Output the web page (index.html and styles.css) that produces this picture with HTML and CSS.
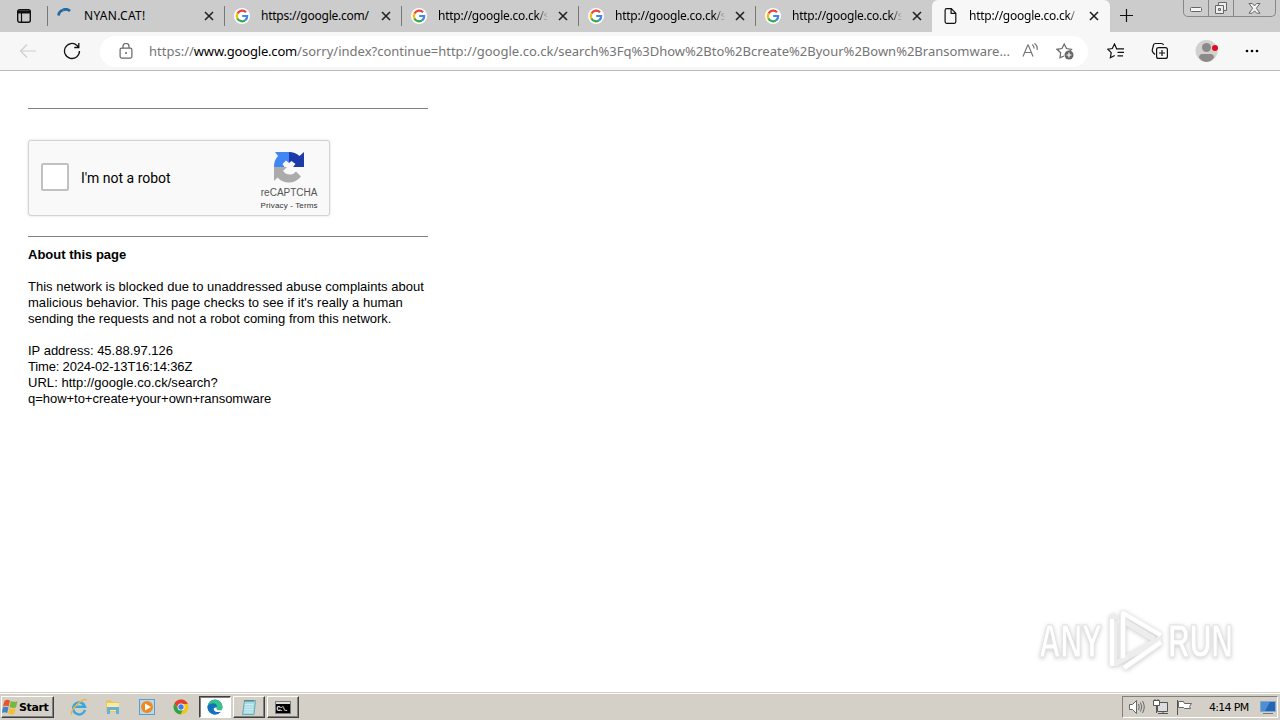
FILE: index.html
```html
<!DOCTYPE html>
<html lang="en">
<head>
    <meta charset="UTF-8">
    <title>http://google.co.ck/search</title>
    <link rel="stylesheet" href="styles.css">
</head>
<body>
<svg class="defs" width="0" height="0">
    <symbol id="google" viewBox="0 0 16 16">
        <circle cx="8" cy="8" r="8" fill="#fff"/>
        <path d="M12 4.2A5.2 5.2 0 0 0 3.5 5.5" fill="none" stroke="#ea4335" stroke-width="2.2"/>
        <path d="M3.5 5.4a5.2 5.2 0 0 0 0 5.2" fill="none" stroke="#fbbc05" stroke-width="2.2"/>
        <path d="M3.4 10.4a5.2 5.2 0 0 0 8.1 1.6" fill="none" stroke="#34a853" stroke-width="2.2"/>
        <path d="M8.2 8h5a5.2 5.2 0 0 1-1.8 4.1" fill="none" stroke="#4285f4" stroke-width="2.2"/>
    </symbol>
    <symbol id="close" viewBox="0 0 10 10">
        <path d="M1 1l8 8M9 1L1 9" fill="none" stroke="#222" stroke-width="1.6"/>
    </symbol>
</svg>

<div class="tabs">
    <div class="tab_actions">
        <svg width="16" height="16" viewBox="0 0 16 16"><rect x="1.7" y="1.7" width="12.6" height="12.6" rx="2" fill="none" stroke="#111" stroke-width="1.4"/><path d="M1.5 2.5h13v3h-13z" fill="#111"/><path d="M5.5 5v9" stroke="#111" stroke-width="1.2"/></svg>
    </div>
    <div class="tab">
        <svg class="tab_icon" viewBox="0 0 16 16"><path d="M1.5 7.500A6.500 6.500 0 0 1 6 2" fill="none" stroke="#24699f" stroke-width="2.800"/><path d="M6 2a6.500 6.500 0 0 1 7 1" fill="none" stroke="#24699f" stroke-width="2.800"/></svg>
        <span class="tab_title first">NYAN.CAT!</span>
        <svg class="tab_close"><use href="#close"/></svg>
    </div>
    <div class="tab">
        <svg class="tab_icon"><use href="#google"/></svg>
        <span class="tab_title">https://google.com/</span>
        <svg class="tab_close"><use href="#close"/></svg>
    </div>
    <div class="tab">
        <svg class="tab_icon"><use href="#google"/></svg>
        <span class="tab_title fade">http://google.co.ck/s</span>
        <svg class="tab_close"><use href="#close"/></svg>
    </div>
    <div class="tab">
        <svg class="tab_icon"><use href="#google"/></svg>
        <span class="tab_title fade">http://google.co.ck/s</span>
        <svg class="tab_close"><use href="#close"/></svg>
    </div>
    <div class="tab">
        <svg class="tab_icon"><use href="#google"/></svg>
        <span class="tab_title fade">http://google.co.ck/s</span>
        <svg class="tab_close"><use href="#close"/></svg>
    </div>
    <div class="tab active">
        <svg class="tab_icon" viewBox="0 0 16 16"><path d="M3.100 2.200q0-1.500 1.500-1.500h4.700l4.500 4.500v8.600q0 1.500-1.500 1.500H4.600q-1.500 0-1.500-1.500zM9.100.7v4.700h4.700" fill="none" stroke="#111" stroke-width="1.200"/></svg>
        <span class="tab_title fade">http://google.co.ck/</span>
        <svg class="tab_close"><use href="#close"/></svg>
    </div>
    <svg class="new_tab" width="14" height="14" viewBox="0 0 14 14"><path d="M6.500 0v13M0 6.500h13" stroke="#111" stroke-width="1.200"/></svg>
    <div class="win_ctl">
        <span><svg width="13" height="6"><rect x=".5" y=".5" width="11" height="4" rx="1" fill="#f5f5f5" stroke="#666"/></svg></span>
        <span><svg width="14" height="14" viewBox="0 0 14 14"><path d="M4.500 1.500h8v8h-8z" fill="#eee" stroke="#666"/><path d="M1.500 4.500h8v8h-8z" fill="#eee" stroke="#666"/><path d="M4.500 7.500h2v2h-2z" fill="#ccc" stroke="#666"/></svg></span>
        <span><svg width="13" height="11" viewBox="0 0 13 11"><path d="M1 .5h3.300l2.200 2.400L8.700.5H12L8.300 5.300l3.700 4.900H8.700L6.500 7.800l-2.200 2.400H1l3.700-4.900z" fill="#f5f5f5" stroke="#666"/></svg></span>
    </div>
</div>

<div class="toolbar">
    <svg class="back" width="18" height="16" viewBox="0 0 18 16"><path d="M17 8H1.500M8 1.500L1.500 8 8 14.500" fill="none" stroke="#cfcfcf" stroke-width="1.200"/></svg>
    <svg class="reload" width="18" height="18" viewBox="0 0 18 18"><path d="M16.500 9A7.500 7.500 0 1 1 14 3.400L15.500 5M15.800 1v4.500h-4.500" fill="none" stroke="#111" stroke-width="1.300"/></svg>
    <div class="address">
        <svg class="lock" width="14" height="16" viewBox="0 0 14 16"><rect x="1.100" y="5.100" width="11.800" height="10" rx="1.500" fill="none" stroke="#666" stroke-width="1.200"/><path d="M4 5V3.500a3 3 0 0 1 6 0V5" fill="none" stroke="#666" stroke-width="1.200"/><circle cx="7" cy="10" r="1" fill="#666"/></svg>
        <span class="url"><span class="scheme">https://</span><b>www.google.com</b><span class="path">/sorry/index?continue=http://google.co.ck/search%3Fq%3Dhow%2Bto%2Bcreate%2Byour%2Bown%2Bransomware...</span></span>
        <svg class="read" width="17" height="16" viewBox="0 0 17 16"><path d="M1 13.500L5.800 2h.5L11 13.500M2.700 9.500h6.700M10.200 1.500q2 1.500 1.700 4M12.500.3q3.200 2.400 2.700 6.700" fill="none" stroke="#777" stroke-width="1.200"/></svg>
        <svg class="fav" width="18" height="18" viewBox="0 0 18 18"><path d="M8 14l-4 1.800.7-5L1 7.300l5-.8L8.200 2l2.300 4.500 5 .8-2 2" fill="none" stroke="#666" stroke-width="1.200"/><circle cx="13" cy="13" r="4.500" fill="#666"/><path d="M13 10.500v5M10.500 13h5" stroke="#fff" stroke-width="1.100"/></svg>
    </div>
    <svg class="favs" width="18" height="16" viewBox="0 0 18 16"><path d="M9.500 5.500L7.500 1 5.300 5.500.8 6.200l3.400 3.500-.8 5 4.300-2.200M9 5.800h8M10.500 9.300H17M10.500 12.800H16" fill="none" stroke="#111" stroke-width="1.200"/></svg>
    <svg class="collections" width="18" height="18" viewBox="0 0 18 18"><path d="M4 12.500L2.500 11Q1 9.500 1.200 8L2.500 3Q3 1.500 4.500 1.500h6q1.500 0 2 1.500" fill="none" stroke="#111" stroke-width="1.200"/><rect x="5.600" y="5.600" width="10.800" height="10.800" rx="2" fill="none" stroke="#111" stroke-width="1.200"/><path d="M11 8v6M8 11h6" stroke="#111" stroke-width="1.200"/></svg>
    <svg class="profile" width="24" height="24" viewBox="0 0 24 24"><circle cx="11.500" cy="12" r="11" fill="#d3d1cf"/><circle cx="11.500" cy="8.500" r="4.500" fill="#8c8a88"/><path d="M4 18.500q0-3.500 3.500-3.500h8q3.500 0 3.500 3.500-2.800 4-7.500 4.500-5-.5-7.500-4.500" fill="#8c8a88"/><circle cx="20" cy="9" r="3" fill="#e00b1c"/></svg>
    <svg class="more" width="14" height="4"><circle cx="2" cy="2" r="1.300"/><circle cx="7" cy="2" r="1.300"/><circle cx="12" cy="2" r="1.300"/></svg>
</div>

<div class="page">
    <div class="content">
        <hr>
        <div class="captcha">
            <span class="checkbox"></span>
            <span class="label">I'm not a robot</span>
            <div class="brand">
                <svg width="32" height="32" viewBox="0 0 32 32">
                    <path d="M16 1Q22 1 26.500 5L31 1v15H20l2.500-3-4-3-2.500 2z" fill="#1c3aa9"/>
                    <path d="M16 1v11l-3-2.500L9.500 13l2 3H1Q1 9 5 5L2 1z" fill="#4285f4"/>
                    <path d="M1 16h13l-4 4q3 4 8 3.500 3-.5 5-3l5 5q-5 6-12 6-7 0-11.500-5L1 30z" fill="#ababab"/>
                </svg>
                <span class="name">reCAPTCHA</span>
                <span class="terms">Privacy - Terms</span>
            </div>
        </div>
        <hr>
        <div class="about">
            <b>About this page</b><br><br>
            <span class="l1">This network is blocked due to unaddressed abuse complaints about</span><br>
            <span class="l2">malicious behavior. This page checks to see if it's really a human</span><br>
            sending the requests and not a robot coming from this network.<br><br>
            IP address: 45.88.97.126<br>
            <span class="time">Time: 2024-02-13T16:14:36Z</span><br>
            <span class="l2">URL: http://google.co.ck/search?</span><br>
            <span class="query">q=how+to+create+your+own+ransomware</span>
        </div>
    </div>
    <svg class="watermark" width="210" height="72" viewBox="0 0 210 72">
        <g class="mark">
            <text x="9" y="55" textLength="63" lengthAdjust="spacingAndGlyphs">ANY</text>
            <path class="edge" d="M93 56V11l38 22M82 18v46M80 17l6-4M84 64V20M94 66l37-26M85 62l46-26M94 19l30 18"/>
            <path d="M93 56V11l38 22M82 17v47M94 66l37-26"/>
            <text x="138" y="55" textLength="65" lengthAdjust="spacingAndGlyphs">RUN</text>
        </g>
    </svg>
</div>

<div class="taskbar">
    <div class="start">
        <svg width="16" height="16" viewBox="0 0 16 16"><path d="M2.500 2Q5 0 8 1.500L6.700 7.500Q4 6 1 7.500z" fill="#e9552b"/><path d="M8.800 2q2.500 1.500 6.700.3L14 8.500q-3.500 1-6.500-.6z" fill="#75b843"/><path d="M.8 8.500q3-1.500 5.700 0L5.200 14q-2.700-1.300-5.200 0z" fill="#3d85c8"/><path d="M7.300 9q3 1.500 6.400.4L12.200 15Q9 16 6 14.500z" fill="#f6bf31"/></svg>
        <b>Start</b>
    </div>
    <span class="task"><svg width="18" height="18" viewBox="0 0 18 18"><path d="M15 12A6 6 0 1 1 15 8.800H4" fill="none" stroke="#36a7df" stroke-width="2.400"/><path d="M2 16.500C-1 13 13-1 16.500 2" fill="none" stroke="#e9b844" stroke-width="1.500"/></svg></span>
    <span class="task"><svg width="18" height="18" viewBox="0 0 18 18"><path d="M2 2h5l1 2h7v10H2z" fill="#e5c766"/><path d="M3 5h12v8H3z" fill="#fae9a3"/><path d="M3 9h12v7h-3v-4H6v4H3z" fill="#64b2d8"/></svg></span>
    <span class="task"><svg width="18" height="18" viewBox="0 0 18 18"><rect x="1.500" y="1.500" width="15" height="15" fill="#b7d9ef" stroke="#5c9cce"/><circle cx="9" cy="9" r="6" fill="#f18a1d"/><path d="M7 5.500l6 3.500-6 3.500z" fill="#fff"/></svg></span>
    <span class="task"><svg width="16" height="16" viewBox="0 0 16 16"><circle cx="8" cy="8" r="7.500" fill="#f6c51c"/><path d="M1.500 4.300A7.500 7.500 0 0 1 14.800 5H8L5 9.500z" fill="#e3402f"/><path d="M1.500 4.300A7.500 7.500 0 0 0 7.500 15.500L10.500 10 5 9.500z" fill="#31a24c"/><circle cx="8" cy="8" r="3.500" fill="#fff"/><circle cx="8" cy="8" r="2.700" fill="#397fe8"/></svg></span>
    <span class="task pressed"><svg width="16" height="16" viewBox="0 0 16 16"><circle cx="8" cy="8" r="7.500" fill="#1684cc"/><path d="M.6 7A7.500 7.500 0 0 1 15.500 8q0 3-3.500 3-3 0-2.500-2.500Q9.500 5 6 5 2.500 5 .6 7" fill="#35c486"/><path d="M.6 7q2-3 5.800-2.800Q9.800 4.500 10 7.500L6 9.500q1 4 7.500 3.600A7.500 7.500 0 0 1 .6 7" fill="#1472bd"/><path d="M9.500 8.500Q9 11 12 11.300q2 .2 3.300-1.300l-1.300 2.800Q8 14 6.700 10.500 6.500 8 9.500 8.500" fill="#fff"/></svg></span>
    <span class="task raised"><svg width="18" height="18" viewBox="0 0 18 18"><path d="M4.500 2.500h11l-1.500 14H2.500z" fill="#a7dce4" stroke="#6ba8b4"/><path d="M5 2v2M7 2v2M9 2v2M11 2v2M13 2v2" stroke="#55727a"/><path d="M5 6.500h8.500M4.800 9h8.500M4.500 11.500H13M4.300 14h8.500" stroke="#d9f3f5" stroke-width=".8"/></svg></span>
    <span class="task raised"><svg width="16" height="13" viewBox="0 0 16 13"><path d="M.5.5h15v12H.5z" fill="#000" stroke="#777"/><path d="M1 1h14v2H1z" fill="#ddd"/><text class="cmd" x="1.500" y="9.500" textLength="12">C:\.</text></svg></span>
    <div class="tray">
        <svg width="18" height="16" viewBox="0 0 18 16"><path d="M1.500 5.500h3l4-4v13l-4-4h-3z" fill="#fff" stroke="#666"/><path d="M10.500 5q1.500 3 0 6M12.500 3.500q2.500 4.500 0 9M14.500 2q3.500 6 0 12" fill="none" stroke="#666"/></svg>
        <svg width="18" height="16" viewBox="0 0 18 16"><path d="M5.500 3.500h10v9h-10zM6 14.500h10M11 12.500v2" fill="#ddd" stroke="#555"/><path d="M1.500 1.500h6v5h-6zM3 0v2M6 0v2M4.500 7v7" fill="#fff" stroke="#555"/></svg>
        <svg width="18" height="16" viewBox="0 0 18 16"><path d="M1.500 1v15" stroke="#555"/><path d="M2.500 2.500h5l1 2h7l-2 3 1 2H8.500l-1-1h-5z" fill="#fff" stroke="#666"/></svg>
        <span class="clock">4:14 PM</span>
        <svg width="18" height="16" viewBox="0 0 18 16"><path d="M1.500 2.500h15v10h-15z" fill="#2465b4" stroke="#84a6c7"/><path d="M2 3h9L6 12H2z" fill="#4d8ed4"/><path d="M4 14.500h10" stroke="#777"/></svg>
    </div>
</div>
</body>
</html>
```

FILE: styles.css
```css
* {
    margin: 0;
    padding: 0;
    box-sizing: border-box;
}

body {
    width: 1280px;
    height: 720px;
    display: flex;
    flex-direction: column;
    overflow: hidden;
    background: #fff;
    color: #000;
    font-family: "Liberation Sans", Arial, sans-serif;
}

svg {
    display: block;
    flex-shrink: 0;
}

.defs {
    position: absolute;
}

/* tab strip */
.tabs {
    height: 32px;
    display: flex;
    background: #ccc;
    font-family: "Noto Sans", sans-serif;
}

.tab_actions {
    width: 47px;
    padding: 8px 0 0 16px;
}

.tab {
    width: 177px;
    height: 32px;
    display: flex;
    align-items: center;
    padding-left: 10px;
    background: linear-gradient(#777, #777) 0 6px / 1px 20px no-repeat;
}

.tab_icon {
    width: 16px;
    height: 16px;
}

.tab_title {
    width: 110px;
    margin-left: 11px;
    white-space: nowrap;
    font-size: 12px;
    line-height: 20px;
    letter-spacing: -0.25px;
}

.first {
    letter-spacing: 0.3px;
}

.fade {
    -webkit-mask-image: linear-gradient(to right, #000 90%, transparent);
    mask-image: linear-gradient(to right, #000 90%, transparent);
}

.tab_close {
    width: 10px;
    height: 10px;
    margin-left: 10px;
}

.active {
    width: 178px;
    background: #f7f7f7;
    border-radius: 6px 6px 0 0;
}

.new_tab {
    margin: 9px 0 0 10px;
}

.win_ctl {
    width: 93px;
    height: 17px;
    margin-left: 49px;
    display: flex;
    border: 1px solid #888;
    border-top: none;
    border-radius: 0 0 5px 5px;
}

.win_ctl span {
    width: 25px;
    display: flex;
    justify-content: center;
    align-items: center;
    border-right: 1px solid #888;
}

.win_ctl span:first-child {
    padding-top: 4px;
}

.win_ctl span:last-child {
    flex: 1;
    border: none;
}

/* toolbar */
.toolbar {
    height: 39px;
    display: flex;
    align-items: center;
    background: #f7f7f7;
    border-bottom: 1px solid #bbb;
}

.back {
    margin-left: 19px;
}

.reload {
    margin-left: 26px;
}

.address {
    width: 988px;
    height: 31px;
    margin-left: 19px;
    padding-left: 19px;
    display: flex;
    align-items: center;
    border-radius: 16px;
    background: #fff;
}

.url {
    width: 864px;
    margin-left: 16px;
    display: flex;
    white-space: nowrap;
    color: #757575;
    font: 13px/20px "Noto Sans", sans-serif;
}

.url b {
    color: #000;
    font-weight: normal;
    letter-spacing: -0.18px;
}

.read {
    margin-left: 9px;
}

.fav {
    margin-left: 17px;
}

.favs {
    margin-left: 19px;
}

.collections {
    margin-left: 26px;
}

.profile {
    margin-left: 26px;
}

.more {
    margin-left: 26px;
}

/* page */
.page {
    flex: 1;
    position: relative;
}

.content {
    width: 400px;
    margin-left: 28px;
    padding-top: 37px;
}

hr {
    height: 1px;
    border: none;
    background: #808080;
}

.captcha {
    width: 302px;
    height: 76px;
    margin: 31px 0 20px;
    padding-left: 12px;
    display: flex;
    align-items: center;
    background: #f9f9f9;
    border: 1px solid #d3d3d3;
    border-radius: 3px;
    box-shadow: 0 0 3px #ddd;
}

.checkbox {
    width: 28px;
    height: 28px;
    margin-top: -3px;
    background: #fff;
    border: 2px solid #c1c1c1;
    border-radius: 2px;
}

.label {
    width: 169px;
    margin-left: 12px;
    font: 14px/20px Roboto, sans-serif;
}

.brand {
    width: 80px;
    padding-top: 6px;
    display: flex;
    flex-direction: column;
    align-items: center;
    color: #555;
}

.name {
    margin-top: 4px;
    font-size: 10px;
    line-height: 12px;
}

.terms {
    color: #333;
    font-size: 8px;
    line-height: 13px;
    letter-spacing: 0.15px;
}

.about {
    padding-top: 10px;
    white-space: nowrap;
    font-size: 13px;
    line-height: 16px;
}

.l1 {
    letter-spacing: 0.02px;
}

.l2 {
    letter-spacing: 0.04px;
}

.time {
    letter-spacing: -0.17px;
}

.query {
    letter-spacing: -0.03px;
}

.watermark {
    position: absolute;
    left: 1030px;
    bottom: 18px;
}

.mark {
    fill: #fff;
    stroke: #e3e3e3;
    filter: drop-shadow(0 1px 2px #ccc);
}

.mark text {
    font: bold 46px "Liberation Sans", Arial, sans-serif;
}

.mark path {
    fill: none;
    stroke: #fff;
    stroke-width: 4;
    stroke-linejoin: round;
}

.mark .edge {
    stroke: #ededed;
    stroke-width: 6;
}

/* taskbar */
.taskbar {
    height: 28px;
    padding-top: 4px;
    display: flex;
    background: linear-gradient(#d4d0c8 1px, #fff 1px, #fff 2px, #d4d0c8 2px);
}

.start, .raised {
    border: 1px solid;
    border-color: #fff #404040 #404040 #fff;
    box-shadow: inset -1px -1px #808080;
}

.start {
    width: 53px;
    height: 22px;
    margin: 0 9px 0 1px;
    display: flex;
    align-items: center;
    font: 11px "DejaVu Sans", sans-serif;
    letter-spacing: -0.4px;
}

.start b {
    margin-left: 1px;
}

.task {
    width: 32px;
    height: 22px;
    margin-right: 2px;
    display: flex;
    align-items: center;
    justify-content: center;
}

.pressed {
    background: #fff;
    border: 1px solid;
    border-color: #404040 #fff #fff #404040;
    box-shadow: inset 1px 1px #808080;
}

.cmd {
    fill: #fff;
    font: bold 7px "Liberation Mono", monospace;
}

.tray {
    width: 156px;
    height: 22px;
    margin: 0 2px 0 auto;
    padding-left: 5px;
    display: flex;
    align-items: center;
    gap: 6px;
    border: 1px solid;
    border-color: #808080 #fff #fff #808080;
}

.clock {
    width: 41px;
    margin: 0 3px 0 9px;
    white-space: nowrap;
    font: 11px "DejaVu Sans", sans-serif;
    letter-spacing: -0.7px;
}
```
